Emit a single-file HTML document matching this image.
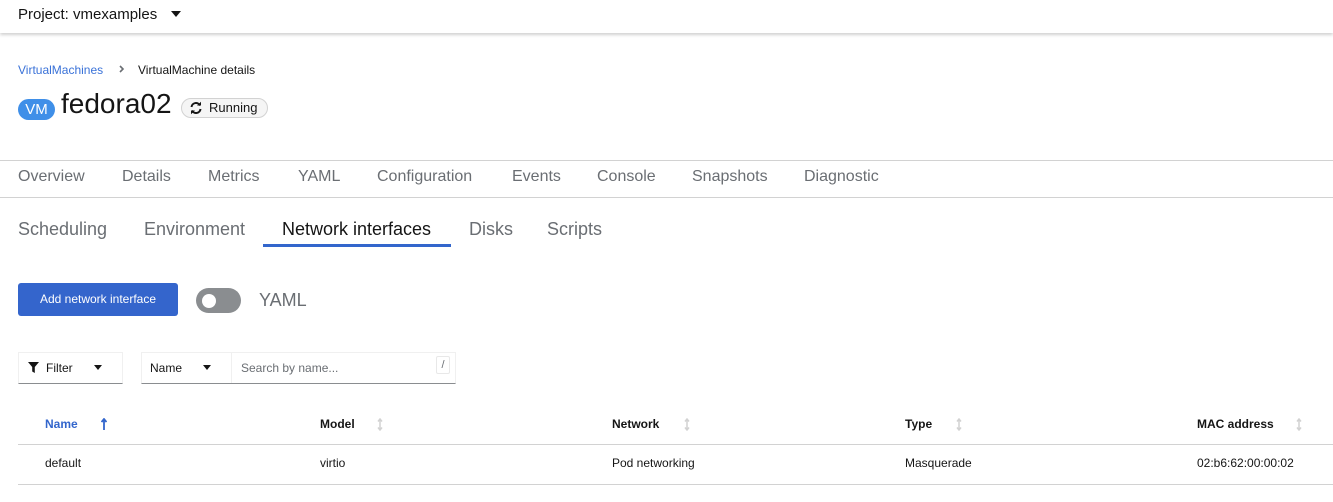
<!DOCTYPE html>
<html><head><meta charset="utf-8"><style>
*{margin:0;padding:0;box-sizing:border-box}
body{width:1333px;height:502px;background:#fff;font-family:"Liberation Sans",sans-serif;position:relative;overflow:hidden;color:#151515}
.a{position:absolute;white-space:nowrap}
.t{font-size:16px;color:#6a6e73;top:168px}
.s{font-size:18px;color:#6a6e73;top:219px}
.h{font-size:12px;font-weight:bold;top:417px;color:#151515}
.d{font-size:12px;top:456px;color:#151515}
.line{position:absolute;left:0;width:1333px;height:1px;background:#d2d2d2}
.sort{position:absolute;top:418px;width:6px;height:13px}
</style></head><body>
<div class="a" style="left:0;top:0;width:1333px;height:33px;box-shadow:0 2px 3px rgba(0,0,0,.18);background:#fff"></div>
<div class="a" style="left:18px;top:6px;font-size:15px">Project: vmexamples</div>
<div class="a" style="left:171px;top:11px;width:0;height:0;border-left:5px solid transparent;border-right:5px solid transparent;border-top:6px solid #151515"></div>

<div class="a" style="left:18px;top:63px;font-size:12px;color:#3a72d8">VirtualMachines</div>
<svg class="a" style="left:119px;top:65px" width="6" height="8" viewBox="0 0 6 8"><path d="M1 1l3 3-3 3" fill="none" stroke="#6a6e73" stroke-width="1.6"/></svg>
<div class="a" style="left:138px;top:63px;font-size:12px">VirtualMachine details</div>

<div class="a" style="left:18px;top:99px;width:37px;height:21px;border-radius:11px;background:#3f8fe8;color:#fff;font-size:15px;text-align:center;line-height:21px">VM</div>
<div class="a" style="left:61px;top:88px;font-size:28px">fedora02</div>
<div class="a" style="left:181px;top:98px;width:87px;height:20px;border:1px solid #d2d2d2;border-radius:10px;background:#f5f5f5;font-size:13px;line-height:18px;padding-left:27px">Running</div>
<svg class="a" style="left:189px;top:101px" width="14" height="14" viewBox="0 0 14 14"><path d="M2.5 6A4.5 4.5 0 0 1 11 4.5M11.5 8A4.5 4.5 0 0 1 3 9.5" fill="none" stroke="#151515" stroke-width="2"/><path d="M8 4.5h4V0.8z M6 9.5H2v3.7z" fill="#151515"/></svg>

<div class="line" style="top:160px"></div>
<div class="line" style="top:197px"></div>
<div class="a t" style="left:18px">Overview</div>
<div class="a t" style="left:122px">Details</div>
<div class="a t" style="left:208px">Metrics</div>
<div class="a t" style="left:298px">YAML</div>
<div class="a t" style="left:377px">Configuration</div>
<div class="a t" style="left:512px">Events</div>
<div class="a t" style="left:597px">Console</div>
<div class="a t" style="left:692px">Snapshots</div>
<div class="a t" style="left:804px">Diagnostic</div>

<div class="a s" style="left:18px">Scheduling</div>
<div class="a s" style="left:144px">Environment</div>
<div class="a s" style="left:282px;color:#151515">Network interfaces</div>
<div class="a s" style="left:469px">Disks</div>
<div class="a s" style="left:547px">Scripts</div>
<div class="a" style="left:263px;top:244px;width:188px;height:3px;background:#3366cc"></div>

<div class="a" style="left:18px;top:283px;width:160px;height:33px;background:#3465cc;border-radius:3px;color:#fff;font-size:12px;text-align:center;line-height:33px">Add network interface</div>
<div class="a" style="left:196px;top:288px;width:45px;height:25px;border-radius:13px;background:#8a8d90"></div>
<div class="a" style="left:202px;top:294px;width:14px;height:14px;border-radius:7px;background:#fff"></div>
<div class="a" style="left:259px;top:290px;font-size:18px;color:#6a6e73">YAML</div>

<div class="a" style="left:18px;top:352px;width:105px;height:32px;border:1px solid #f0f0f0;border-bottom:1px solid #8a8d90"></div>
<svg class="a" style="left:28px;top:362px" width="11" height="11" viewBox="0 0 11 11"><path d="M0 0h11L6.8 5v6L4.2 9.5V5z" fill="#151515"/></svg>
<div class="a" style="left:46px;top:361px;font-size:12px">Filter</div>
<div class="a" style="left:94px;top:365px;border-left:4.5px solid transparent;border-right:4.5px solid transparent;border-top:5px solid #151515"></div>

<div class="a" style="left:141px;top:352px;width:315px;height:32px;border:1px solid #f0f0f0;border-bottom:1px solid #8a8d90"></div>
<div class="a" style="left:231px;top:352px;width:1px;height:31px;background:#f0f0f0"></div>
<div class="a" style="left:150px;top:361px;font-size:12px">Name</div>
<div class="a" style="left:203px;top:365px;border-left:4.5px solid transparent;border-right:4.5px solid transparent;border-top:5px solid #151515"></div>
<div class="a" style="left:241px;top:361px;font-size:12px;color:#6a6e73">Search by name...</div>
<div class="a" style="left:436px;top:356px;width:14px;height:18px;border:1px solid #e8e8e8;border-radius:2px;font-size:11px;color:#6a6e73;text-align:center;line-height:16px">/</div>

<div class="a h" style="left:45px;color:#3366cc">Name</div>
<svg class="sort" style="left:101px" viewBox="0 0 6 13"><path d="M3 1v11M0.5 4L3 1l2.5 3" fill="none" stroke="#3366cc" stroke-width="1.8"/></svg>
<div class="a h" style="left:320px">Model</div>
<div class="a h" style="left:612px">Network</div>
<div class="a h" style="left:905px">Type</div>
<div class="a h" style="left:1197px">MAC address</div>
<svg class="sort" style="left:377px" viewBox="0 0 6 13"><path d="M3 1v11M1 3.5L3 1l2 2.5M1 9.5L3 12l2-2.5" fill="none" stroke="#d2d2d2" stroke-width="1.5"/></svg>
<svg class="sort" style="left:684px" viewBox="0 0 6 13"><path d="M3 1v11M1 3.5L3 1l2 2.5M1 9.5L3 12l2-2.5" fill="none" stroke="#d2d2d2" stroke-width="1.5"/></svg>
<svg class="sort" style="left:956px" viewBox="0 0 6 13"><path d="M3 1v11M1 3.5L3 1l2 2.5M1 9.5L3 12l2-2.5" fill="none" stroke="#d2d2d2" stroke-width="1.5"/></svg>
<svg class="sort" style="left:1296px" viewBox="0 0 6 13"><path d="M3 1v11M1 3.5L3 1l2 2.5M1 9.5L3 12l2-2.5" fill="none" stroke="#d2d2d2" stroke-width="1.5"/></svg>
<div class="line" style="top:444px;left:18px;width:1315px"></div>
<div class="a d" style="left:45px">default</div>
<div class="a d" style="left:320px">virtio</div>
<div class="a d" style="left:612px">Pod networking</div>
<div class="a d" style="left:905px">Masquerade</div>
<div class="a d" style="left:1197px">02:b6:62:00:00:02</div>
<div class="line" style="top:484px;left:18px;width:1315px"></div>
</body></html>
